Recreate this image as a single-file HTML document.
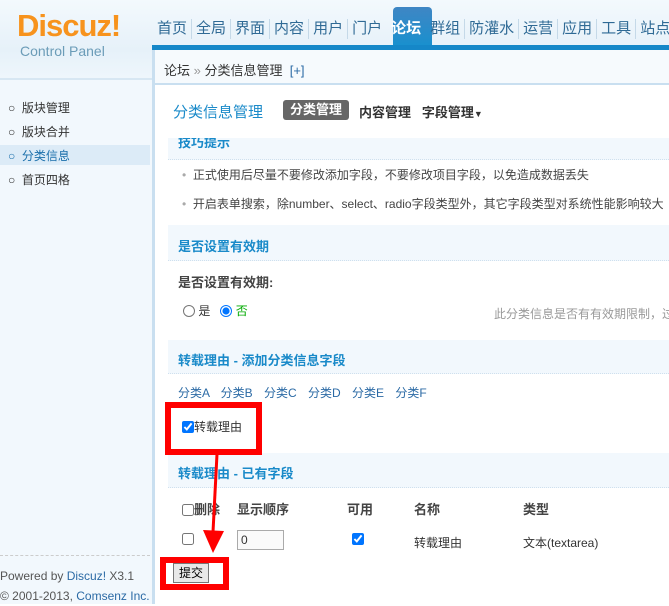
<!DOCTYPE html>
<html><head><meta charset="utf-8"><style>
*{margin:0;padding:0;box-sizing:border-box}
body{width:669px;height:604px;overflow:hidden;position:relative;background:#fff;font-family:"Liberation Sans","Noto Sans CJK SC",sans-serif;font-size:12px;color:#333}
.a{position:absolute;white-space:nowrap}
.hdr{left:0;top:0;width:669px;height:50px;background:linear-gradient(#f3f9fd,#e6f1f9)}
.nav span{display:inline-block;padding:0 4px;border-right:1px solid #c5d9e8;color:#2f6a95;font-size:15px;line-height:20px}
.sec{background:#f2f8fd;border-bottom:1px dotted #cfe0ee;left:168px;width:501px}
.st{color:#1a8ac9;font-weight:bold;font-size:13px}
.red{border:6px solid #f00}
</style></head><body>
<div class="a hdr"></div>
<div class="a" style="left:0;top:78px;width:152px;height:526px;background:#f2f8fd;border-top:2px solid #d7e7f3"></div>
<div class="a" style="left:0;top:50px;width:152px;height:28px;background:linear-gradient(#e6f1f9,#eef6fc)"></div>
<div class="a" style="left:17px;top:8px;font-size:31px;font-weight:bold;color:#f7931d;letter-spacing:-1px">Discuz!</div>
<div class="a" style="left:20px;top:43px;font-size:14px;color:#6b9cb8">Control Panel</div>
<div class="a" style="left:393px;top:7px;width:39px;height:43px;background:linear-gradient(#3f86c4,#1591cf);border-radius:4px 4px 0 0"></div>
<div class="a nav" style="left:153px;top:19px"><span>首页</span><span>全局</span><span>界面</span><span>内容</span><span>用户</span><span style="border:0">门户</span><span style="color:#fff;font-weight:bold;border:0;padding:0 5px">论坛</span><span>群组</span><span>防灌水</span><span>运营</span><span>应用</span><span>工具</span><span>站点</span></div>
<div class="a" style="left:152px;top:45px;width:517px;height:5px;background:#1587c8"></div>
<div class="a" style="left:152px;top:50px;width:3px;height:554px;background:#c9dff0"></div>
<div class="a" style="left:155px;top:50px;width:514px;height:35px;background:#f6fafd;border-bottom:2px solid #c9dff0"></div>
<div class="a" style="left:164px;top:60px;font-size:13px;color:#333">论坛 <span style="color:#999">»</span> 分类信息管理 <span style="color:#2b6aa5">&nbsp;[+]</span></div>
<div class="a" style="left:8px;top:96px;line-height:24px;color:#333">○ &nbsp;版块管理<br>○ &nbsp;版块合并</div>
<div class="a" style="left:0;top:145px;width:150px;height:20px;background:#dcebf7"></div>
<div class="a" style="left:8px;top:144px;line-height:24px;color:#1a6fab">○ &nbsp;分类信息<br><span style="color:#333">○ &nbsp;首页四格</span></div>
<div class="a" style="left:0;top:555px;width:150px;border-top:1px dashed #ccc"></div>
<div class="a" style="left:0;top:566px;font-size:12px;color:#555;line-height:20px">Powered by <span style="color:#2b6aa5">Discuz!</span> X3.1<br>© 2001-2013, <span style="color:#2b6aa5">Comsenz Inc.</span></div>
<div class="a" style="left:173px;top:101px;font-size:15px;color:#1a8ac9">分类信息管理</div>
<div class="a" style="left:283px;top:100px;width:66px;height:20px;background:#666;border-radius:3px;color:#fff;font-weight:bold;font-size:13px;text-align:center;line-height:20px">分类管理</div>
<div class="a" style="left:359px;top:102px;font-weight:bold;font-size:13px;color:#333">内容管理 &nbsp;&nbsp;字段管理<span style="font-size:9px">▼</span></div>
<div class="a sec" style="top:138px;height:22px;overflow:hidden"><div class="a st" style="left:10px;top:-6px">技巧提示</div></div>
<div class="a" style="left:182px;top:161px;color:#444;line-height:29px"><span style="color:#aaa">•</span> &nbsp;正式使用后尽量不要修改添加字段，不要修改项目字段，以免造成数据丢失<br><span style="color:#aaa">•</span> &nbsp;开启表单搜索，除number、select、radio字段类型外，其它字段类型对系统性能影响较大</div>
<div class="a sec" style="top:225px;height:36px"></div>
<div class="a st" style="left:178px;top:236px">是否设置有效期</div>
<div class="a" style="left:178px;top:272px;font-weight:bold;color:#444;font-size:13px">是否设置有效期:</div>
<div class="a" style="left:183px;top:302px;color:#333"><input type="radio" style="width:12px;height:12px;vertical-align:-2px"> 是 &nbsp;&nbsp;<input type="radio" checked style="width:12px;height:12px;vertical-align:-2px"> <span style="color:#0a0">否</span></div>
<div class="a" style="left:494px;top:305px;color:#999">此分类信息是否有有效期限制，过期</div>
<div class="a sec" style="top:340px;height:34px"></div>
<div class="a st" style="left:178px;top:350px">转载理由 - 添加分类信息字段</div>
<div class="a" style="left:178px;top:384px;color:#2b6aa5;word-spacing:8px">分类A 分类B 分类C 分类D 分类E 分类F</div>
<div class="a" style="left:182px;top:418px"><input type="checkbox" checked style="width:12px;height:12px;vertical-align:-2px">转载理由</div>
<div class="a sec" style="top:453px;height:35px"></div>
<div class="a st" style="left:178px;top:463px">转载理由 - 已有字段</div>
<div class="a" style="left:182px;top:499px;font-weight:bold;color:#444;font-size:13px"><input type="checkbox" style="width:12px;height:12px;vertical-align:-2px">删除</div>
<div class="a" style="left:237px;top:499px;font-weight:bold;color:#444;font-size:13px">显示顺序</div>
<div class="a" style="left:347px;top:499px;font-weight:bold;color:#444;font-size:13px">可用</div>
<div class="a" style="left:414px;top:499px;font-weight:bold;color:#444;font-size:13px">名称</div>
<div class="a" style="left:523px;top:499px;font-weight:bold;color:#444;font-size:13px">类型</div>
<div class="a" style="left:182px;top:533px"><input type="checkbox" style="width:12px;height:12px"></div>
<div class="a" style="left:237px;top:530px;width:47px;height:20px;border:1px solid #aaa;background:#fafafa;padding-left:3px;line-height:18px">0</div>
<div class="a" style="left:352px;top:533px"><input type="checkbox" checked style="width:12px;height:12px"></div>
<div class="a" style="left:414px;top:534px">转载理由</div>
<div class="a" style="left:523px;top:534px">文本(textarea)</div>
<div class="a" style="left:173px;top:563px;width:36px;height:20px;background:#e8e8e8;border:1px solid #777;text-align:center;line-height:18px;color:#000">提交</div>
<div class="a red" style="left:165px;top:402px;width:97px;height:53px"></div>
<div class="a red" style="left:160px;top:557px;width:69px;height:33px"></div>
<svg class="a" style="left:200px;top:452px" width="30" height="104"><line x1="17" y1="2" x2="13" y2="80" stroke="#f00" stroke-width="3"/><polygon points="3,78 24,79 13,101" fill="#f00"/></svg>
</body></html>
